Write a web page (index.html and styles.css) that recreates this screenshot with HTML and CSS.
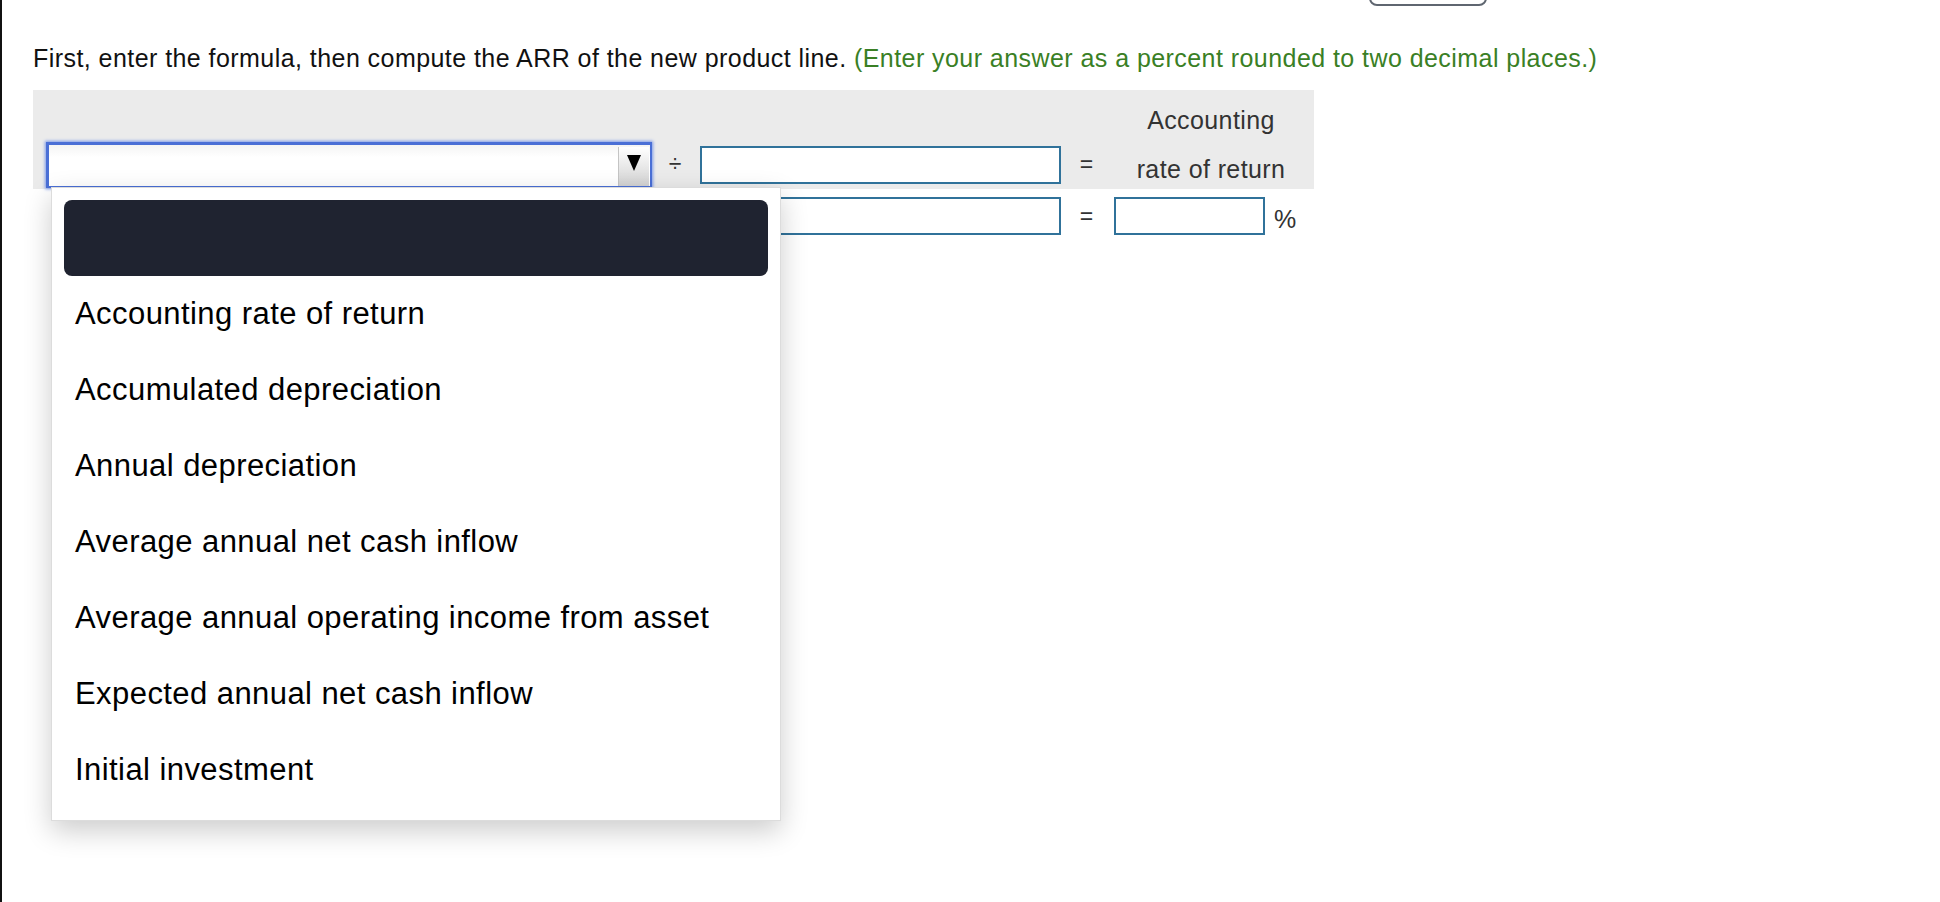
FILE: index.html
```html
<!DOCTYPE html>
<html lang="en">
<head>
<meta charset="utf-8">
<title>ARR formula</title>
<link rel="stylesheet" href="styles.css">
</head>
<body>
<div class="page">
  <div class="topstrip"><div class="topbtn"></div></div>
  <p class="prompt">First, enter the formula, then compute the ARR of the new product line. <span class="hint">(Enter your answer as a percent rounded to two decimal places.)</span></p>
  <div class="formula">
    <div class="shaded">
      <div class="row row-head">
        <div></div><div></div><div></div><div></div>
        <div class="label">Accounting</div>
      </div>
      <div class="row row-main">
        <div class="cell-first">
          <div class="select">
            <span class="select-arrow"><svg width="14" height="16" viewBox="0 0 14 16"><polygon points="0,0 14,0 7,16" fill="#000"/></svg></span>
          </div>
        </div>
        <div class="op">÷</div>
        <div><div class="field"></div></div>
        <div class="op">=</div>
        <div class="label label-low">rate of return</div>
      </div>
    </div>
    <div class="row row-answer">
      <div class="cell-first cell-hidden"><div class="field"></div></div>
      <div class="op">÷</div>
      <div><div class="field"></div></div>
      <div class="op">=</div>
      <div class="answer"><div class="field field-small"></div><span class="pct">%</span></div>
    </div>
    <ul class="dropdown">
      <li class="dropdown-current"></li>
      <li>Accounting rate of return</li>
      <li>Accumulated depreciation</li>
      <li>Annual depreciation</li>
      <li>Average annual net cash inflow</li>
      <li>Average annual operating income from asset</li>
      <li>Expected annual net cash inflow</li>
      <li>Initial investment</li>
    </ul>
  </div>
</div>
</body>
</html>
```
FILE: styles.css
```css
html, body {
  margin: 0;
  padding: 0;
  background: #fff;
}

.page {
  box-sizing: border-box;
  min-height: 902px;
  border-left: 2px solid #111;
  padding-left: 31px;
  font-family: "Liberation Sans", Arial, Helvetica, sans-serif;
  color: #111;
}

.topstrip {
  height: 6px;
  overflow: hidden;
  display: flex;
  align-items: flex-end;
  padding-left: 1336px;
}

.topbtn {
  flex: none;
  box-sizing: border-box;
  width: 118px;
  height: 30px;
  border: 2px solid #5f6670;
  border-radius: 8px;
}

.prompt {
  margin: 38px 0 0;
  font-size: 25px;
  line-height: 28px;
  letter-spacing: 0.44px;
  white-space: nowrap;
}

.hint {
  color: #3a7f25;
}

.formula {
  position: relative;
  width: 1281px;
  margin-top: 18px;
}

.shaded {
  background: #ebebeb;
  padding-top: 10px;
}

.row {
  display: grid;
  grid-template-columns: 619px 48px 361px 53px 200px;
  align-items: center;
}

.row-head {
  height: 40px;
}

.row-main {
  height: 49px;
}

.row-answer {
  height: 54px;
}

.cell-first {
  padding-left: 13px;
}

.cell-hidden {
  padding-left: 30px;
}

.label {
  font-size: 25px;
  line-height: 40px;
  letter-spacing: 0.4px;
  color: #333;
  text-align: center;
  padding-right: 6px;
}

.label-low {
  align-self: end;
  line-height: 30px;
  margin-bottom: 5px;
}

.op {
  font-size: 23px;
  color: #333;
  text-align: center;
  padding-right: 2px;
}

.select {
  box-sizing: border-box;
  width: 606px;
  height: 46px;
  border: 3px solid #4a6fd6;
  border-right-width: 2px;
  border-bottom-width: 2px;
  box-shadow: 0 0 3px 1px #7b98e8;
  background: linear-gradient(#f4f4f4, #ffffff 30%);
  display: flex;
  justify-content: flex-end;
}

.select-arrow {
  box-sizing: border-box;
  width: 31px;
  margin: 2px 1px 0 0;
  padding-top: 8px;
  display: flex;
  justify-content: center;
  align-items: flex-start;
  background: linear-gradient(#ffffff, #d2d2d2);
  border-left: 1px solid #c4c4c4;
}

.field {
  box-sizing: border-box;
  height: 38px;
  border: 2px solid #30729a;
  background: #fff;
}

.cell-first .field {
  width: 589px;
}

.answer {
  display: flex;
  align-items: center;
  gap: 9px;
}

.field-small {
  width: 151px;
}

.pct {
  font-size: 25px;
  color: #333;
  padding-top: 6px;
}

.dropdown {
  position: absolute;
  left: 18px;
  top: 97px;
  box-sizing: border-box;
  width: 730px;
  margin: 0;
  padding: 12px;
  list-style: none;
  background: #fff;
  border: 1px solid #dcdcdc;
  box-shadow: 0 10px 26px rgba(0, 0, 0, 0.2);
}

.dropdown li {
  height: 76px;
  line-height: 76px;
  padding-left: 11px;
  font-size: 31px;
  letter-spacing: 0.43px;
  color: #000;
  white-space: nowrap;
}

.dropdown .dropdown-current {
  background: #1f2330;
  border-radius: 8px;
}
```
